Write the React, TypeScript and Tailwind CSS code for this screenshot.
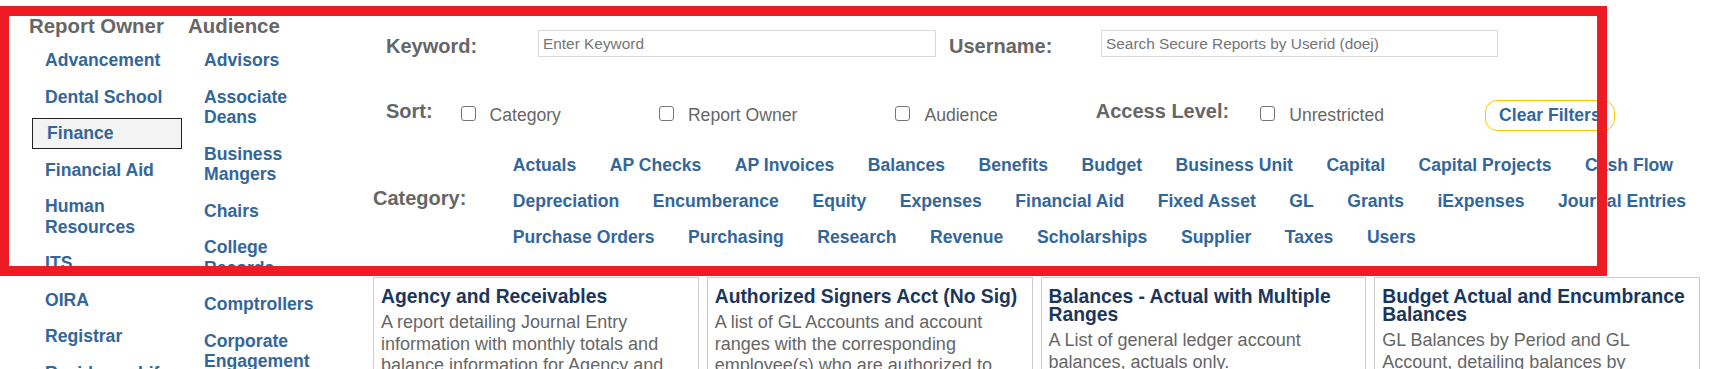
const owners = [
  'Advancement',
  'Dental School',
  'Finance',
  'Financial Aid',
  'Human Resources',
  'ITS',
  'OIRA',
  'Registrar',
  'Residence Life',
];

const audiences = [
  'Advisors',
  'Associate Deans',
  'Business Mangers',
  'Chairs',
  'College Records',
  'Comptrollers',
  'Corporate Engagement',
];

const categories = [
  'Actuals', 'AP Checks', 'AP Invoices', 'Balances', 'Benefits', 'Budget', 'Business Unit', 'Capital',
  'Capital Projects', 'Cash Flow', 'Depreciation', 'Encumberance', 'Equity', 'Expenses', 'Financial Aid',
  'Fixed Asset', 'GL', 'Grants', 'iExpenses', 'Journal Entries', 'Purchase Orders', 'Purchasing',
  'Research', 'Revenue', 'Scholarships', 'Supplier', 'Taxes', 'Users',
];

const reports = [
  {
    title: 'Agency and Receivables',
    text: 'A report detailing Journal Entry information with monthly totals and balance information for Agency and Receivables accounts.',
  },
  {
    title: 'Authorized Signers Acct (No Sig)',
    text: 'A list of GL Accounts and account ranges with the corresponding employee(s) who are authorized to approve transactions.',
  },
  {
    title: 'Balances - Actual with Multiple Ranges',
    text: 'A List of general ledger account balances, actuals only.',
  },
  {
    title: 'Budget Actual and Encumbrance Balances',
    text: 'GL Balances by Period and GL Account, detailing balances by Organization and Fund.',
  },
];

function SideList({ items, active }: { items: string[]; active?: string }) {
  return (
    <ul className="mt-[7px]">
      {items.map((item) =>
        item === active ? (
          <li
            key={item}
            className="ml-[3px] w-[150px] border border-[#222] bg-[#f3f3f3] py-[4px] pl-[14px] mb-[6px] leading-[20.5px] text-[17.6px] font-bold text-[#336699]"
          >
            {item}
          </li>
        ) : (
          <li
            key={item}
            className="border border-transparent py-[4px] pl-[15px] mb-[6px] leading-[20.5px] text-[17.6px] font-bold text-[#336699]"
          >
            {item}
          </li>
        )
      )}
    </ul>
  );
}

function Check({ label, className = '' }: { label: string; className?: string }) {
  return (
    <label className={`flex items-center gap-[14px] text-[17.6px] text-[#666] ${className}`}>
      <span className="mb-[4px] w-[15px] h-[15px] border border-[#767676] rounded-[3px] bg-white"></span>
      {label}
    </label>
  );
}

export default function App() {
  return (
    <div className="relative bg-white font-['Liberation_Sans',Arial,sans-serif]">
      <div className="flex items-start">
        {/* sidebar filters */}
        <aside className="w-[373px] shrink-0 flex pl-[29px] pt-[14px]">
          <div className="w-[159px]">
            <h3 className="text-[20.4px] leading-[24px] font-bold text-[#666]">Report Owner</h3>
            <SideList items={owners} active="Finance" />
          </div>
          <div className="w-[150px]">
            <h3 className="text-[20.4px] leading-[24px] font-bold text-[#666]">Audience</h3>
            <SideList items={audiences} />
          </div>
        </aside>

        <main className="flex-1 pr-[30px] pt-[30px]">
          <div className="flex items-center h-[27px] pl-[13px]">
            <span className="w-[152px] mt-[5px] text-[20px] font-bold text-[#666]">Keyword:</span>
            <input
              className="w-[398px] h-[27px] border border-[#d9d9d9] px-[4px] text-[15.4px] text-[#333] placeholder:text-[#757575] outline-none"
              placeholder="Enter Keyword"
            />
            <span className="ml-[13px] w-[152px] mt-[5px] text-[20px] font-bold text-[#666]">Username:</span>
            <input
              className="w-[397px] h-[27px] border border-[#d9d9d9] px-[4px] text-[15.4px] text-[#333] placeholder:text-[#757575] outline-none"
              placeholder="Search Secure Reports by Userid (doej)"
            />
          </div>

          <div className="mt-[43px] flex items-center h-[31px] pl-[13px]">
            <span className="w-[74.5px] mb-[10px] text-[20px] font-bold text-[#666]">Sort:</span>
            <Check label="Category" className="mr-[98px]" />
            <Check label="Report Owner" className="mr-[98px]" />
            <Check label="Audience" className="mr-[98px]" />
            <span className="mb-[10px] text-[20px] font-bold text-[#666]">Access Level:</span>
            <Check label="Unrestricted" className="ml-[31px]" />
            <button className="ml-[101px] h-[31px] px-[13px] rounded-[12px] border border-[#fcc800] bg-white text-[17.6px] font-bold text-[#336699]">
              Clear Filters
            </button>
          </div>

          <div className="mt-[23.6px] flex items-start">
            <span className="w-[139.7px] shrink-0 mt-[31px] text-[20px] leading-[24px] font-bold text-[#666]">
              Category:
            </span>
            <div className="flex-1 flex flex-wrap gap-x-[33.5px] gap-y-[16px]">
              {categories.map((c) => (
                <a key={c} className="text-[17.6px] leading-[20px] font-bold text-[#336699] whitespace-nowrap">
                  {c}
                </a>
              ))}
            </div>
          </div>

          <div className="mt-[30.4px] grid grid-cols-4 gap-[8px]">
            {reports.map((r) => (
              <div key={r.title} className="border border-[#cccccc] pt-[10.5px] px-[7px] pb-[12px]">
                <h4 className="mb-[6px] text-[19.3px] leading-[18px] font-bold text-[#1b365d]">{r.title}</h4>
                <p className="text-[18px] leading-[21.3px] text-[#666]">{r.text}</p>
              </div>
            ))}
          </div>
        </main>
      </div>

      {/* annotation frame */}
      <div className="absolute left-[-1px] top-[6px] w-[1608px] h-[270px] border-[10px] border-[#ed1c24] pointer-events-none"></div>
    </div>
  );
}
